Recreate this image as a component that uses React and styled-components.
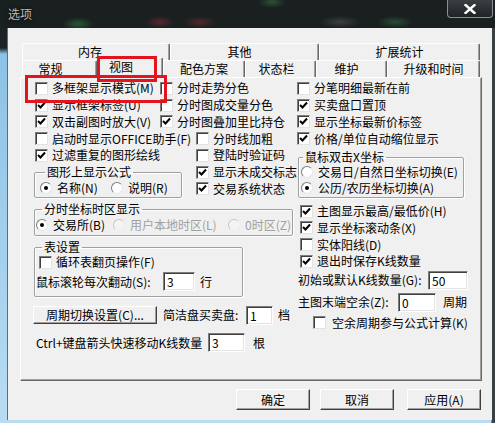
import React from "react";
import styled, { createGlobalStyle } from "styled-components";

const GlobalStyle = createGlobalStyle`
  html, body { margin: 0; padding: 0; background: #1d2324; }
  body {
    font-family: "Noto Sans CJK SC", "Noto Sans", sans-serif;
    font-size: 12px;
    color: #000;
  }
`;

const ROW = "16.75px";

const Window = styled.div`
  position: relative;
  width: 495px;
  height: 423px;
  overflow: hidden;
  display: flex;
  flex-direction: column;
  background:
    linear-gradient(to right, transparent 0, transparent 491px, #3a3f42 492px),
    linear-gradient(to bottom, #1d2324 0, #1d2324 48px, #8cc2e6 54px, #b9dcf3 100%);
`;

const TitleBar = styled.div`
  height: 28px;
  flex: none;
  display: flex;
  justify-content: space-between;
  align-items: flex-start;
  background:
    radial-gradient(ellipse 16px 7px at 78px 24px, rgba(60, 150, 80, 0.45), transparent),
    radial-gradient(ellipse 14px 6px at 160px 22px, rgba(170, 50, 60, 0.45), transparent),
    radial-gradient(ellipse 16px 6px at 200px 22px, rgba(170, 50, 60, 0.4), transparent),
    radial-gradient(ellipse 14px 6px at 272px 2px, rgba(60, 150, 80, 0.45), transparent),
    radial-gradient(ellipse 18px 6px at 395px 22px, rgba(60, 150, 80, 0.4), transparent),
    radial-gradient(ellipse 20px 6px at 340px 22px, rgba(120, 120, 130, 0.35), transparent),
    #1a1f20;
`;

const Title = styled.span`
  margin: 7px 0 0 8px;
  line-height: 14px;
  color: #b8bcbd;
  text-shadow: 0 0 4px #000;
`;

const CloseButton = styled.div`
  width: 44px;
  height: 17px;
  margin-right: 2px;
  display: flex;
  align-items: center;
  justify-content: center;
  border: 1px solid #8a9092;
  border-top: none;
  border-radius: 0 0 4px 4px;
  background: linear-gradient(#3a4042, #1e2325);
`;

const Client = styled.div`
  margin-left: 7px;
  width: 485px;
  height: 392px;
  box-sizing: border-box;
  background: #f0f0f0;
  border-left: 1px solid #5d6e78;
  padding: 15px 10px 0 12px;
  display: flex;
  flex-direction: column;
`;

const TabRow = styled.div`
  display: flex;
  height: 17px;
  padding: 0 2px;
`;

const Tab = styled.div`
  position: relative;
  box-sizing: border-box;
  width: ${(p) => p.$w}px;
  height: ${(p) => (p.$active ? 21 : 17)}px;
  margin-top: ${(p) => (p.$active ? -3 : 0)}px;
  z-index: ${(p) => (p.$active ? 2 : 0)};
  background: #f0f0f0;
  border-top: 1px solid #fff;
  border-left: 1px solid #fff;
  border-right: 1px solid #696969;
  box-shadow: inset -1px 0 0 #a0a0a0;
  border-radius: 2px 2px 0 0;
  text-align: center;
  line-height: ${(p) => (p.$active ? 17 : 16)}px;
  padding-right: ${(p) => p.$pr || 0}px;
  white-space: nowrap;
`;

const Panel = styled.div`
  position: relative;
  z-index: 1;
  height: 304px;
  box-sizing: border-box;
  border-top: 1px solid #fff;
  border-left: 1px solid #fff;
  border-right: 1px solid #696969;
  border-bottom: 1px solid #696969;
  box-shadow: inset -1px -1px 0 #a0a0a0;
  display: grid;
  grid-template-columns: 263px 1fr;
  align-items: start;
  padding: 2px 0 0 13px;
`;

const Column = styled.div`
  display: flex;
  flex-direction: column;
  padding-left: ${(p) => p.$pl || 0}px;
  margin-top: ${(p) => p.$mt || 0}px;
`;

const Grid = styled.div`
  display: grid;
  grid-template-columns: ${(p) => p.$cols};
  grid-auto-rows: ${ROW};
`;

const CheckRow = styled.label`
  display: flex;
  align-items: center;
  gap: ${(p) => p.$gap || 4}px;
  height: ${(p) => p.$h || ROW};
  margin-left: ${(p) => p.$ml || 0}px;
  white-space: nowrap;
  line-height: 14px;
  color: ${(p) => (p.$disabled ? "#a0a0a0" : "#000")};
`;

const Box = styled.span`
  width: 13px;
  height: 13px;
  flex: none;
  box-sizing: border-box;
  background: #fff;
  border: 1px solid;
  border-color: #7d7d7d #e3e3e3 #e3e3e3 #7d7d7d;
  box-shadow: inset 1px 1px 0 #3f3f3f;
  display: flex;
  align-items: center;
  justify-content: center;
`;

const Circle = styled.span`
  width: 12px;
  height: 12px;
  flex: none;
  box-sizing: border-box;
  border-radius: 50%;
  background: ${(p) => (p.$disabled ? "#f4f4f4" : "#fff")};
  border: 1px solid;
  border-color: ${(p) =>
    p.$disabled ? "#c8c8c8 #eee #eee #c8c8c8" : "#7d7d7d #e6e6e6 #e6e6e6 #7d7d7d"};
  display: flex;
  align-items: center;
  justify-content: center;
  margin-left: ${(p) => p.$ml || 0}px;
`;

const Dot = styled.span`
  width: 4px;
  height: 4px;
  border-radius: 50%;
  background: #000;
`;

const Check = ({ checked, children, ml, gap, h }) => (
  <CheckRow $ml={ml} $gap={gap} $h={h}>
    <Box>
      {checked && (
        <svg width="9" height="9" viewBox="0 0 9 9">
          <path d="M1 4 L3.5 6.5 L8 1.5" stroke="#000" strokeWidth="2" fill="none" />
        </svg>
      )}
    </Box>
    <span>{children}</span>
  </CheckRow>
);

const Radio = ({ checked, disabled, children, w, ml, gap, h }) => (
  <CheckRow $disabled={disabled} $gap={gap || 5} $h={h} style={w ? { width: w } : undefined}>
    <Circle $disabled={disabled} $ml={ml}>{checked && <Dot />}</Circle>
    <span>{children}</span>
  </CheckRow>
);

const Group = styled.fieldset`
  margin: ${(p) => p.$mt || 0}px 0 ${(p) => p.$mb || 0}px ${(p) => p.$ml || 0}px;
  padding: ${(p) => p.$pt || 0}px 0 ${(p) => p.$pb || 1}px ${(p) => p.$pl || 0}px;
  min-width: 0;
  width: ${(p) => p.$w}px;
  box-sizing: border-box;
  border: 1px solid #a0a0a0;
  box-shadow: 1px 1px 0 #fff, inset 1px 1px 0 #fff;
  border-radius: 2px;
  align-self: ${(p) => p.$self || "auto"};
  grid-row: ${(p) => p.$row || "auto"};
`;

const Legend = styled.legend`
  padding: 0 2px;
  margin-left: ${(p) => p.$ml || 4}px;
  line-height: 14px;
  height: 14px;
`;

const Inline = styled.div`
  display: flex;
  align-items: center;
  height: ${(p) => (p.$h === undefined ? 19 : p.$h)}px;
  margin: ${(p) => p.$mt || 0}px 0 0 ${(p) => p.$ml || 0}px;
  white-space: nowrap;
`;

const Text = styled.span`
  display: inline-block;
  width: ${(p) => (p.$w ? `${p.$w}px` : "auto")};
  margin-left: ${(p) => p.$ml || 0}px;
  line-height: 14px;
  flex: none;
`;

const Input = styled.div`
  width: ${(p) => p.$w}px;
  height: 19px;
  flex: none;
  box-sizing: border-box;
  background: #fff;
  border: 1px solid;
  border-color: #7d7d7d #fff #fff #7d7d7d;
  box-shadow: inset 1px 1px 0 #404040, inset -1px -1px 0 #e3e3e3;
  padding: 0 3px;
  line-height: 17px;
  font-size: 12px;
`;

const PushButton = styled.div`
  width: ${(p) => p.$w}px;
  height: ${(p) => p.$h}px;
  flex: none;
  box-sizing: border-box;
  margin-left: ${(p) => p.$ml || 0}px;
  background: #f0f0f0;
  border: 1px solid;
  border-color: #fff #404040 #404040 #fff;
  box-shadow: inset -1px -1px 0 #a0a0a0;
  display: flex;
  align-items: center;
  justify-content: center;
  white-space: nowrap;
  line-height: 14px;
`;

const Footer = styled.div`
  display: flex;
  justify-content: flex-end;
  gap: 10px;
  margin-top: 8px;
  padding-right: 1px;
`;

const Mark = styled.div`
  position: absolute;
  left: ${(p) => p.$x}px;
  top: ${(p) => p.$y}px;
  width: ${(p) => p.$w}px;
  height: ${(p) => p.$h}px;
  box-sizing: border-box;
  border: 3px solid #e3141e;
  z-index: 5;
  pointer-events: none;
`;

const topTabs = [
  { label: "内存", w: 148, pr: 12 },
  { label: "其他", w: 149, pr: 10 },
  { label: "扩展统计", w: 161 },
];

const bottomTabs = [
  { label: "常规", w: 75, pr: 18 },
  { label: "视图", w: 66, active: true, pr: 18 },
  { label: "配色方案", w: 82 },
  { label: "状态栏", w: 71, pr: 8 },
  { label: "维护", w: 71, pr: 10 },
  { label: "升级和时间", w: 93 },
];

export default function App() {
  return (
    <Window>
      <GlobalStyle />
      <TitleBar>
        <Title>选项</Title>
        <CloseButton>
          <svg width="12" height="10" viewBox="0 0 12 10">
            <path d="M1.5 1 L10.5 9 M10.5 1 L1.5 9" stroke="#fff" strokeWidth="2.4" strokeLinecap="square" />
          </svg>
        </CloseButton>
      </TitleBar>

      <Client>
        <TabRow>
          {topTabs.map((t) => (
            <Tab key={t.label} $w={t.w} $pr={t.pr}>{t.label}</Tab>
          ))}
        </TabRow>
        <TabRow>
          {bottomTabs.map((t) => (
            <Tab key={t.label} $w={t.w} $active={t.active} $pr={t.pr}>{t.label}</Tab>
          ))}
        </TabRow>

        <Panel>
          <Column $pl={1}>
            <Grid $cols="125px 1fr">
              <Check>多框架显示模式(M)</Check>
              <Check>分时走势分色</Check>
              <Check checked>显示框架标签(U)</Check>
              <Check>分时图成交量分色</Check>
              <Check checked>双击副图时放大(V)</Check>
              <Check checked>分时图叠加里比持仓</Check>
            </Grid>
            <Grid $cols="161px 1fr">
              <Check>启动时显示OFFICE助手(F)</Check>
              <Check>分时线加粗</Check>
              <Check checked>过滤重复的图形绘线</Check>
              <Check>登陆时验证码</Check>
              <Group $w={148} $ml={-1} $mb={-1} $pl={5} $pt={1} $self="end" $row="3 / span 2">
                <Legend $ml={5}>图形上显示公式</Legend>
                <Inline $h={16}>
                  <Radio checked w={71} h="16px">名称(N)</Radio>
                  <Radio h="16px">说明(R)</Radio>
                </Inline>
              </Group>
              <Check checked>显示未成交标志</Check>
              <Check checked>交易系统状态</Check>
            </Grid>

            <Group $w={259} $ml={-1} $mt={5} $pt={1} $pb={2} $pl={1}>
              <Legend $ml={6}>分时坐标时区显示</Legend>
              <Inline $h={16}>
                <Radio checked w={76} h="16px">交易所(B)</Radio>
                <Radio disabled w={116} ml={1} h="16px">用户本地时区(L)</Radio>
                <Radio disabled h="16px">0时区(Z)</Radio>
              </Inline>
            </Group>

            <Group $w={209} $ml={-1} $mt={4} $pb={5} $pl={1}>
              <Legend $ml={6}>表设置</Legend>
              <Check ml={3} h="16px">循环表翻页操作(F)</Check>
              <Inline $mt={2}>
                <Text $w={127}>鼠标滚轮每次翻动(S):</Text>
                <Input $w={32}>3</Input>
                <Text $ml={5}>行</Text>
              </Inline>
            </Group>

            <Inline $mt={9} $h={18}>
              <PushButton $w={124} $h={18} $ml={-2}>周期切换设置(C)...</PushButton>
              <Text $w={83} $ml={6}>简洁盘买卖盘:</Text>
              <Input $w={27}>1</Input>
              <Text $ml={5}>档</Text>
            </Inline>

            <Inline $mt={9}>
              <Text $w={172} $ml={1}>Ctrl+键盘箭头快速移动K线数量</Text>
              <Input $w={37}>3</Input>
              <Text $ml={8}>根</Text>
            </Inline>
          </Column>

          <Column>
            <Check>分笔明细最新在前</Check>
            <Check checked>买卖盘口置顶</Check>
            <Check checked>显示坐标最新价标签</Check>
            <Check checked>价格/单位自动缩位显示</Check>

            <Group $w={166} $ml={1} $mt={3} $pl={2}>
              <Legend $ml={2}>鼠标双击X坐标</Legend>
              <Radio h="16px">交易日/自然日坐标切换(E)</Radio>
              <Radio checked h="16px">公历/农历坐标切换(A)</Radio>
            </Group>

            <Column $pl={3} $mt={5}>
              <Check checked h="16.67px">主图显示最高/最低价(H)</Check>
              <Check checked h="16.67px">显示坐标滚动条(X)</Check>
              <Check h="16.67px">实体阳线(D)</Check>
              <Check checked h="16.67px">退出时保存K线数量</Check>
            </Column>

            <Inline $mt={1} $ml={1}>
              <Text $w={130}>初始或默认K线数量(G):</Text>
              <Input $w={40}>50</Input>
            </Inline>
            <Inline $mt={3} $ml={1}>
              <Text $w={100}>主图末端空余(Z):</Text>
              <Input $w={38}>0</Input>
              <Text $ml={7}>周期</Text>
            </Inline>
            <Check ml={16} gap={6} h="22px">空余周期参与公式计算(K)</Check>
          </Column>
        </Panel>

        <Footer>
          <PushButton $w={74} $h={21}>确定</PushButton>
          <PushButton $w={74} $h={21}>取消</PushButton>
          <PushButton $w={74} $h={21} $ml={3}>应用(A)</PushButton>
        </Footer>
      </Client>

      <Mark $x={97} $y={56} $w={60} $h={26} />
      <Mark $x={25} $y={75} $w={142} $h={28} />
    </Window>
  );
}
